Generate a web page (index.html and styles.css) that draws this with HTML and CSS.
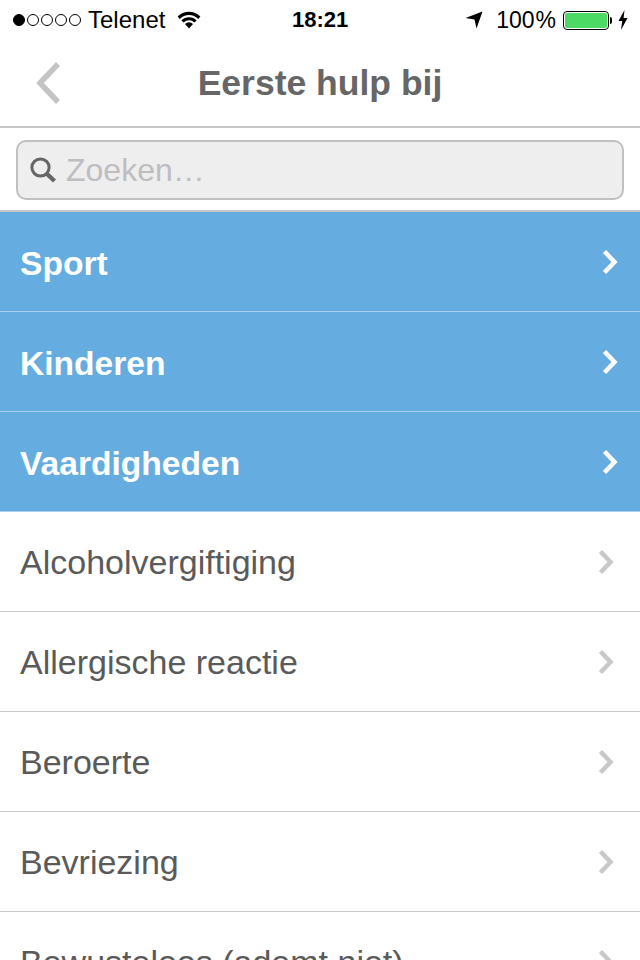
FILE: index.html
```html
<!DOCTYPE html>
<html lang="nl">
<head>
  <meta charset="UTF-8" />
  <meta name="viewport" content="width=device-width, initial-scale=1.0"/>
  <title>Eerste hulp bij</title>
  <link rel="stylesheet" href="styles.css">
</head>
<body>

  <div class="screen">
    <!-- Status bar -->
    <div class="statusbar">
      <div class="status-left">
        <span class="signal">
          <i class="dot on"></i><i class="dot"></i><i class="dot"></i><i class="dot"></i><i class="dot"></i>
        </span>
        <span class="carrier">Telenet</span>
        <svg class="wifi" width="24" height="18" viewBox="0 0 24 18">
          <path d="M0.6 5.6 A16 16 0 0 1 23.4 5.6 L21.2 7.9 A13 13 0 0 0 2.8 7.9 Z" fill="#000"/>
          <path d="M4.4 9.4 A10.6 10.6 0 0 1 19.6 9.4 L17.4 11.6 A7.6 7.6 0 0 0 6.6 11.6 Z" fill="#000"/>
          <path d="M8 13 A5.4 5.4 0 0 1 16 13 L12 17.4 Z" fill="#000"/>
        </svg>
      </div>
      <div class="status-time">18:21</div>
      <div class="status-right">
        <svg class="arrow" width="18" height="18" viewBox="0 0 18 18">
          <path d="M17.5 0.5 L11.5 17.5 L9.5 8.5 L0.5 7 Z" fill="#000"/>
        </svg>
        <span class="percent">100<span class="pct">%</span></span>
        <span class="battery"><span class="battery-fill"></span></span>
        <span class="battery-tip"></span>
        <svg class="bolt" width="10" height="20" viewBox="0 0 10 20">
          <path d="M6.5 0 L0.5 11 L4.2 11 L3 20 L9.5 8 L5.6 8 Z" fill="#000"/>
        </svg>
      </div>
    </div>

    <!-- Navigation -->
    <div class="navbar">
      <svg class="back" width="28" height="44" viewBox="0 0 28 44">
        <path d="M24 3 L6 22 L24 41" fill="none" stroke="#c4c4c4" stroke-width="5.5"/>
      </svg>
      <h1>Eerste hulp bij</h1>
    </div>

    <!-- Search -->
    <div class="searchbar">
      <div class="searchbox">
        <svg class="glass" width="28" height="28" viewBox="0 0 28 28">
          <circle cx="11.5" cy="11.5" r="8.6" fill="none" stroke="#666" stroke-width="3"/>
          <path d="M17.5 17.5 L25.5 25" stroke="#666" stroke-width="4.4" fill="none"/>
        </svg>
        <span class="placeholder">Zoeken…</span>
      </div>
    </div>

    <!-- List -->
    <ul class="list">
      <li class="row featured"><span>Sport</span><svg class="chevron" viewBox="0 0 16 26"><path d="M2.5 2.5 L12.5 13 L2.5 23.5"/></svg></li>
      <li class="row featured"><span>Kinderen</span><svg class="chevron" viewBox="0 0 16 26"><path d="M2.5 2.5 L12.5 13 L2.5 23.5"/></svg></li>
      <li class="row featured"><span>Vaardigheden</span><svg class="chevron" viewBox="0 0 16 26"><path d="M2.5 2.5 L12.5 13 L2.5 23.5"/></svg></li>
      <li class="row"><span>Alcoholvergiftiging</span><svg class="chevron" viewBox="0 0 16 26"><path d="M2.5 2.5 L12.5 13 L2.5 23.5"/></svg></li>
      <li class="row"><span>Allergische reactie</span><svg class="chevron" viewBox="0 0 16 26"><path d="M2.5 2.5 L12.5 13 L2.5 23.5"/></svg></li>
      <li class="row"><span>Beroerte</span><svg class="chevron" viewBox="0 0 16 26"><path d="M2.5 2.5 L12.5 13 L2.5 23.5"/></svg></li>
      <li class="row"><span>Bevriezing</span><svg class="chevron" viewBox="0 0 16 26"><path d="M2.5 2.5 L12.5 13 L2.5 23.5"/></svg></li>
      <li class="row"><span>Bewusteloos (ademt niet)</span><svg class="chevron" viewBox="0 0 16 26"><path d="M2.5 2.5 L12.5 13 L2.5 23.5"/></svg></li>
    </ul>
  </div>

</body>
</html>
```

FILE: styles.css
```css
html, body {
  margin: 0;
  padding: 0;
  background-color: #fff;
}

body {
  font-family: 'Liberation Sans', Arial, sans-serif;
  overflow: hidden;
}

.screen {
  width: 640px;
  height: 960px;
  overflow: hidden;
}

/* Status bar */
.statusbar {
  height: 40px;
  display: flex;
  align-items: center;
  justify-content: space-between;
  padding: 0 12px 0 13px;
  box-sizing: border-box;
  color: #000;
  font-size: 24px;
  position: relative;
}

.status-left,
.status-right {
  display: flex;
  align-items: center;
}

.signal {
  display: flex;
  gap: 2px;
  margin-right: 7px;
}

.dot {
  width: 12px;
  height: 12px;
  border: 1px solid #000;
  border-radius: 50%;
  box-sizing: border-box;
}

.dot.on {
  background-color: #000;
}

.wifi {
  margin-left: 12px;
}

.status-time {
  position: absolute;
  left: 292px;
  font-weight: bold;
  font-size: 22px;
}

.arrow {
  margin-right: 13px;
}

.percent {
  font-size: 23px;
  margin-right: 7px;
}

.pct {
  margin-left: 1px;
}

.battery {
  width: 46px;
  height: 19px;
  border: 1px solid #000;
  border-radius: 4px;
  box-sizing: border-box;
  padding: 1px;
  display: flex;
}

.battery-fill {
  flex: 1;
  background-color: #4cd964;
  border-radius: 2px;
}

.battery-tip {
  width: 2px;
  height: 7px;
  background-color: #000;
  margin-left: 1px;
  border-radius: 0 2px 2px 0;
}

.bolt {
  margin-left: 6px;
}

/* Navigation */
.navbar {
  height: 86px;
  display: flex;
  align-items: center;
  justify-content: center;
  border-bottom: 2px solid #c8c8c8;
  position: relative;
}

.navbar h1 {
  margin: 0;
  font-size: 35.5px;
  font-weight: bold;
  color: #666;
}

.back {
  position: absolute;
  left: 34px;
  top: 21px;
}

/* Search */
.searchbar {
  height: 84px;
  box-sizing: border-box;
  padding: 12px 16px 10px;
  border-bottom: 2px solid #c8c8c8;
}

.searchbox {
  height: 60px;
  box-sizing: border-box;
  background-color: #eee;
  border: 2px solid #c0c0c0;
  border-radius: 10px;
  display: flex;
  align-items: center;
  padding-left: 11px;
}

.glass {
  margin-right: 9px;
}

.placeholder {
  font-size: 32px;
  color: #bdbdc2;
}

/* List */
.list {
  list-style: none;
  margin: 0;
  padding: 0;
}

.row {
  height: 100px;
  box-sizing: border-box;
  display: flex;
  align-items: center;
  justify-content: space-between;
  padding: 0 26px 0 20px;
  border-bottom: 1px solid #c8c8c8;
  font-size: 34px;
  color: #5a5a5a;
}

.row span {
  padding-top: 2px;
}

.featured {
  padding-right: 22px;
  background-color: #65ade1;
  color: #fff;
  font-size: 33.6px;
  font-weight: bold;
  border-bottom-color: #a8cfee;
}

.featured span {
  padding-top: 4px;
}

.chevron {
  width: 16px;
  height: 26px;
  fill: none;
  stroke: #c8c8c8;
  stroke-width: 4.5;
}

.featured .chevron {
  stroke: #fff;
}
```
